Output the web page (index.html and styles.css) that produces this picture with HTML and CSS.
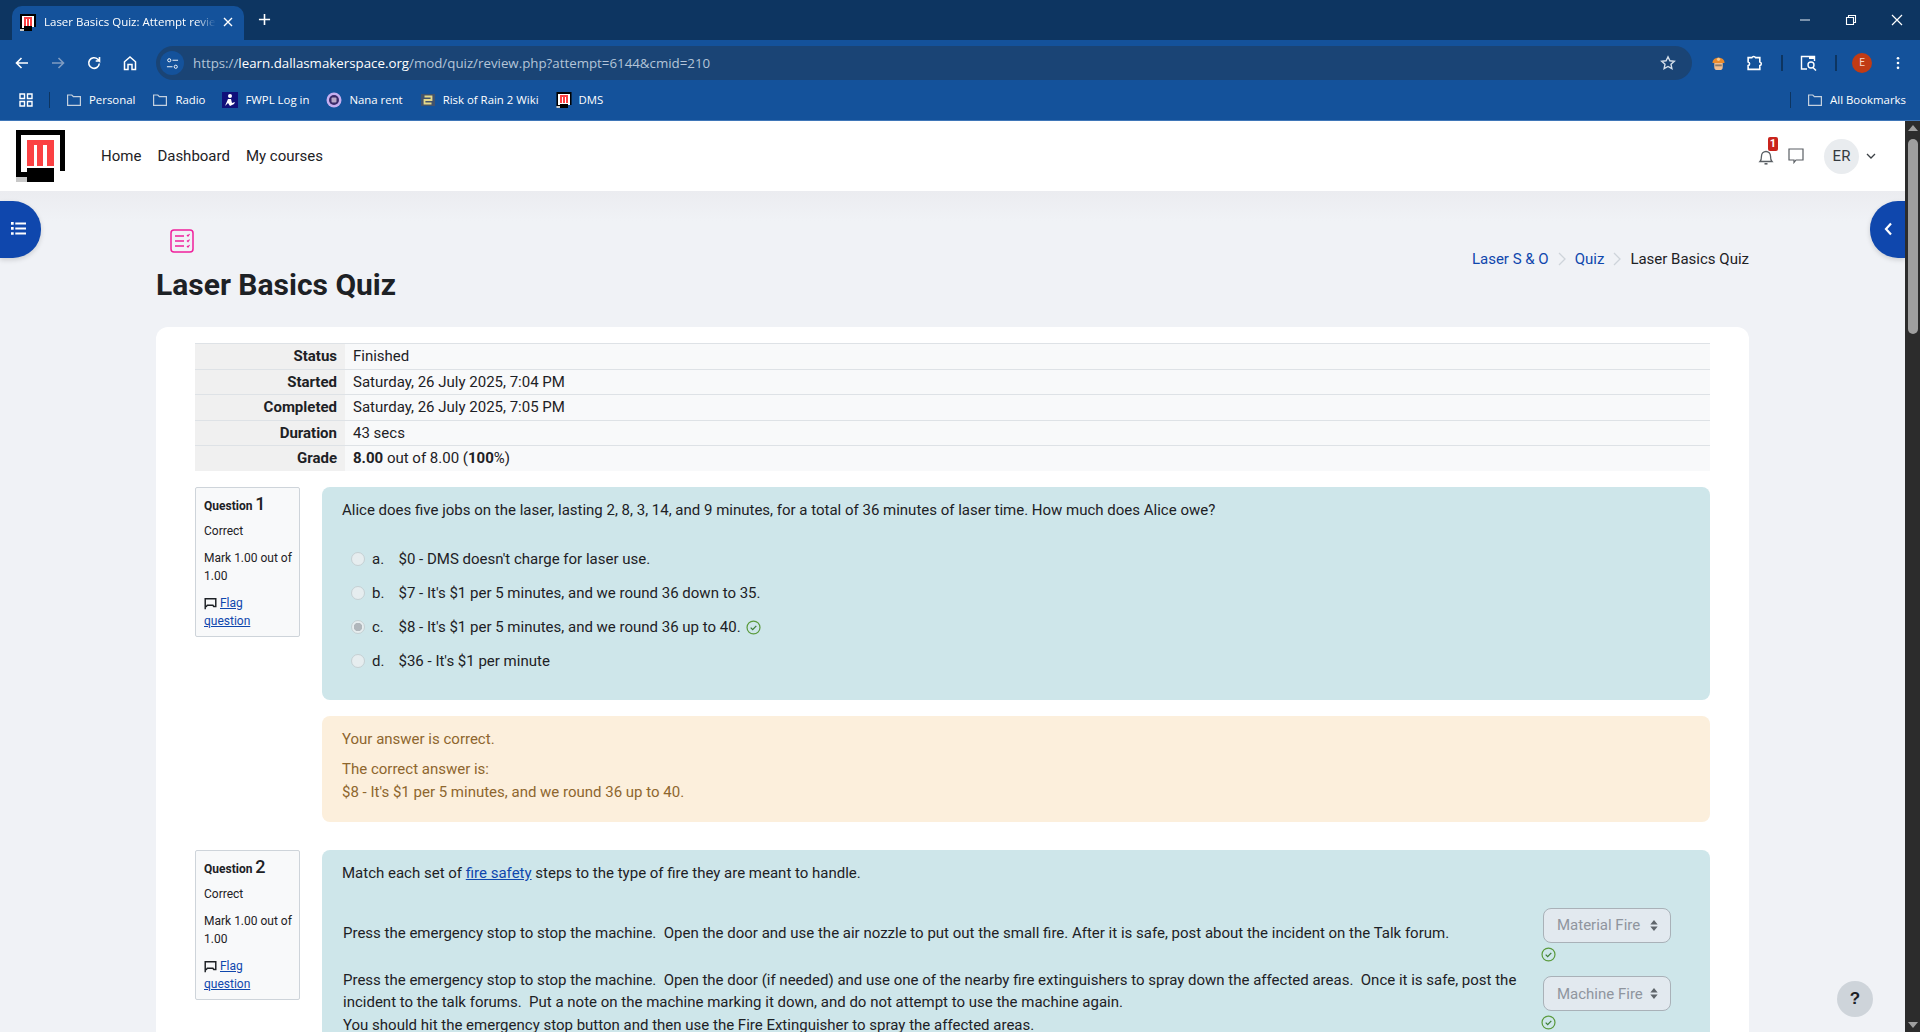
FILE: index.html
```html
<!DOCTYPE html>
<html lang="en">
<head>
  <meta charset="UTF-8">
  <title>Laser Basics Quiz: Attempt review</title>
  <link rel="stylesheet" href="styles.css">
</head>
<body>

  <svg class="defs" width="0" height="0">
    <defs>
      <symbol id="dms" viewBox="0 0 49 52" shape-rendering="crispEdges">
        <path fill="#000" d="M0 0h49v41H38v11H11v-5H0z"/>
        <path fill="#fff" d="M5 5h39v36h-6v-3H11v4H5z"/>
        <path fill="#fb4143" d="M11 10h27v26h-7V15h-4v21h-6V15h-3.500v21H11z"/>
        <path fill="#c8c8c8" d="M0 47h11v5H0z"/>
      </symbol>
      <symbol id="folder" viewBox="0 0 16 16">
        <path fill="none" stroke="currentColor" stroke-width="1.2" d="M1.6 3h4.2l1.6 1.7h7v8.7H1.6z"/>
      </symbol>
      <symbol id="check" viewBox="0 0 16 16">
        <circle cx="8" cy="8" r="6.9" fill="none" stroke="#5a9a3c" stroke-width="1.3"/>
        <path d="M5 8.2l2.1 2.1L11 6.2" fill="none" stroke="#3d7d35" stroke-width="1.3"/>
      </symbol>
      <symbol id="flag" viewBox="0 0 16 16">
        <path d="M1.5 15V2.2h13v9.6H12l-1-1.600H4l-1.200 1.600H1.500" fill="none" stroke="#1d2125" stroke-width="1.8"/>
      </symbol>
    </defs>
  </svg>

  <!-- Browser -->
  <div class="tabstrip">
    <div class="tab">
      <svg class="favicon"><use href="#dms"/></svg>
      <span class="tab-title">Laser Basics Quiz: Attempt review</span>
      <svg class="ico-s" viewBox="0 0 12 12"><path d="M2 2l8 8M10 2l-8 8" stroke="#fff" stroke-width="1.4"/></svg>
    </div>
    <svg class="new-tab" viewBox="0 0 14 14"><path d="M7 1v12M1 7h12" stroke="#fff" stroke-width="1.7"/></svg>
    <div class="win-controls">
      <svg viewBox="0 0 12 12"><path d="M1 6h10" stroke="#c4d0de" stroke-width="1.2"/></svg>
      <svg viewBox="0 0 12 12"><path d="M1.5 3.5h7v7h-7zM3.5 3.5v-2h7v7h-2" fill="none" stroke="#fff" stroke-width="1.1"/></svg>
      <svg viewBox="0 0 12 12"><path d="M1 1l10 10M11 1L1 11" stroke="#fff" stroke-width="1.2"/></svg>
    </div>
  </div>

  <div class="toolbar">
    <div class="tool-btns">
      <svg viewBox="0 0 16 16"><path d="M14 8H2.5M7.5 3l-5 5 5 5" fill="none" stroke="#fff" stroke-width="1.6"/></svg>
      <svg viewBox="0 0 16 16"><path d="M2 8h11.5M8.5 3l5 5-5 5" fill="none" stroke="#7f9cc2" stroke-width="1.6"/></svg>
      <svg viewBox="0 0 16 16"><path d="M13.3 8.5a5.3 5.3 0 1 1-1.5-4.2L13.5 6V2M13.5 6H9.7" fill="none" stroke="#fff" stroke-width="1.6"/></svg>
      <svg viewBox="0 0 16 16"><path d="M2.5 14.500V6.800L8 2l5.500 4.800v7.700H10V9.500H6v5z" fill="none" stroke="#fff" stroke-width="1.5"/></svg>
    </div>
    <div class="urlbar">
      <span class="site-info">
        <svg viewBox="0 0 14 14"><circle cx="3.500" cy="3.500" r="1.700" fill="none" stroke="#fff"/><path d="M7 3.500h6M1 10.500h6" stroke="#fff"/><circle cx="10.500" cy="10.500" r="1.700" fill="none" stroke="#fff"/></svg>
      </span>
      <span class="url"><span class="url-dim">https://</span>learn.dallasmakerspace.org<span class="url-dim">/mod/quiz/review.php?attempt=6144&amp;cmid=210</span></span>
      <svg class="star" viewBox="0 0 16 16"><path d="M8 1.800l1.900 4 4.400.5-3.300 3 .9 4.400L8 11.500l-3.900 2.200.9-4.400-3.300-3 4.400-.5z" fill="none" stroke="#d5dfea" stroke-width="1.400"/></svg>
    </div>
    <div class="tool-right">
      <svg class="ext" viewBox="0 0 16 16"><path d="M1.500 7.500a6.500 6 0 0 1 13 0z" fill="#e98a2c"/><circle cx="8" cy="3.500" r="1.700" fill="#f7c98e"/><path d="M3.500 7.500h9v4.500a3 3 0 0 1-3 3h-3a3 3 0 0 1-3-3z" fill="#f0bd90"/><path d="M4.500 9h7v2h-7z" fill="#8a7a6a"/></svg>
      <svg class="puzzle" viewBox="0 0 16 16"><path d="M2 2.500h3.500a2 2 0 0 1 3.500 0h4v4a1.800 1.800 0 0 1 0 3.500v3.500H2v-3.500a1.800 1.800 0 0 0 0-3.500z" fill="none" stroke="#fff" stroke-width="1.500"/></svg>
      <i class="tool-sep"></i>
      <svg class="tab-search" viewBox="0 0 18 16"><path d="M7 14H1.500V1.500h13V6" fill="none" stroke="#fff" stroke-width="1.400"/><path d="M9 1.500h5.500V4H9z" fill="#fff"/><circle cx="11" cy="10" r="3" fill="none" stroke="#fff" stroke-width="1.400"/><path d="M13 12.500l3 3" stroke="#fff" stroke-width="1.500"/></svg>
      <i class="tool-sep"></i>
      <span class="profile">E</span>
      <svg class="dots" viewBox="0 0 4 16"><circle cx="2" cy="2.500" r="1.500" fill="#fff"/><circle cx="2" cy="8" r="1.500" fill="#fff"/><circle cx="2" cy="13.500" r="1.500" fill="#fff"/></svg>
    </div>
  </div>

  <div class="bookmarks">
    <svg class="apps" viewBox="0 0 14 14"><path d="M1 1h4.500v4.500H1zM8.500 1H13v4.500H8.500zM1 8.500h4.500V13H1zM8.500 8.500H13V13H8.500z" fill="none" stroke="#fff" stroke-width="1.400"/></svg>
    <i class="bm-sep"></i>
    <span class="bm"><svg class="bm-folder"><use href="#folder"/></svg>Personal</span>
    <span class="bm"><svg class="bm-folder"><use href="#folder"/></svg>Radio</span>
    <span class="bm"><svg viewBox="0 0 16 16"><path fill="#10107a" d="M0 0h16v16H0z"/><circle cx="8" cy="4" r="2" fill="#fff"/><path d="M6 7h3l1 4 3-1-1 2-4 2-2-3-3 3z" fill="#fff"/></svg>FWPL Log in</span>
    <span class="bm"><svg viewBox="0 0 16 16"><circle cx="8" cy="8" r="7.500" fill="#c6aef0"/><circle cx="8" cy="8" r="5" fill="#3a2a6a"/><rect x="5.500" y="5.500" width="5" height="5" rx="1" fill="#b9a8c8"/></svg>Nana rent</span>
    <span class="bm"><svg viewBox="0 0 16 16"><path fill="#43536b" d="M1 2h14v12H1z"/><path d="M4.500 4.500h7v3.500h-7v3.500h7" fill="none" stroke="#e5d98a" stroke-width="1.800"/></svg>Risk of Rain 2 Wiki</span>
    <span class="bm"><svg viewBox="0 0 49 52"><use href="#dms"/></svg>DMS</span>
    <i class="bm-sep bm-sep-right"></i>
    <span class="bm bm-last"><svg class="bm-folder"><use href="#folder"/></svg>All Bookmarks</span>
  </div>

  <div class="window">
    <div class="viewport">

      <!-- Barra do site -->
      <nav class="navbar">
        <svg class="logo"><use href="#dms"/></svg>
        <a class="nav-link">Home</a>
        <a class="nav-link">Dashboard</a>
        <a class="nav-link">My courses</a>
        <div class="nav-right">
          <span class="bell">
            <svg viewBox="0 0 16 18"><path d="M2 13.500c1.500-1.500 1.500-3 1.500-5.500a4.500 4.500 0 0 1 9 0c0 2.500 0 4 1.500 5.500z" fill="none" stroke="#5a5f64" stroke-width="1.300"/><path d="M6.500 15.800h3" stroke="#5a5f64" stroke-width="1.600"/></svg>
            <b class="badge">1</b>
          </span>
          <svg class="chat" viewBox="0 0 16 16"><path d="M1 1h14v11H8l-2 2.500V12H1z" fill="none" stroke="#5a5f64" stroke-width="1.200"/></svg>
          <span class="avatar">ER</span>
          <svg class="caret" viewBox="0 0 10 6"><path d="M1 1l4 4 4-4" fill="none" stroke="#3b4045" stroke-width="1.300"/></svg>
        </div>
      </nav>

      <button class="drawer-btn drawer-left">
        <svg viewBox="0 0 14 12"><path d="M0 0h2.500v2.500H0zM4 .3h10v2H4zM0 4.700h2.500v2.500H0zM4 5h10v2H4zM0 9.400h2.500v2.500H0zM4 9.700h10v2H4z" fill="#fff"/></svg>
      </button>
      <button class="drawer-btn drawer-right">
        <svg viewBox="0 0 8 14"><path d="M6.500 1.500L1.500 7l5 5.500" fill="none" stroke="#fff" stroke-width="2.200"/></svg>
      </button>
      <button class="help-btn">?</button>

      <main class="main">
        <header class="page-head">
          <div class="head-left">
            <svg class="quiz-icon" viewBox="0 0 24 24">
              <rect x="1" y="1" width="22" height="22" rx="3" fill="none" stroke="#f0219c" stroke-width="1.500"/>
              <path d="M5 7h9M5 12h9M5 17h9" stroke="#f0219c" stroke-width="1.500"/>
              <path d="M17 6l1 1 1.500-2M17 11.500l1 1 1.500-2M17 17l1 1 1.500-2" fill="none" stroke="#f0219c" stroke-width="1.200"/>
            </svg>
            <h1>Laser Basics Quiz</h1>
          </div>
          <div class="breadcrumb">
            <a>Laser S &amp; O</a>
            <svg viewBox="0 0 8 14"><path d="M1 1l6 6-6 6" fill="none" stroke="#ced4da" stroke-width="1.300"/></svg>
            <a>Quiz</a>
            <svg viewBox="0 0 8 14"><path d="M1 1l6 6-6 6" fill="none" stroke="#ced4da" stroke-width="1.300"/></svg>
            <span>Laser Basics Quiz</span>
          </div>
        </header>

        <section class="card">
          <table class="summary">
            <tr><th>Status</th><td>Finished</td></tr>
            <tr><th>Started</th><td>Saturday, 26 July 2025, 7:04 PM</td></tr>
            <tr><th>Completed</th><td>Saturday, 26 July 2025, 7:05 PM</td></tr>
            <tr><th>Duration</th><td>43 secs</td></tr>
            <tr><th>Grade</th><td><b>8.00</b> out of 8.00 (<b>100</b>%)</td></tr>
          </table>

          <!-- Questão 1 -->
          <article class="que">
            <aside class="que-info">
              <h3>Question <span>1</span></h3>
              <p>Correct</p>
              <p>Mark 1.00 out of 1.00</p>
              <p><svg class="flag"><use href="#flag"/></svg> <a>Flag<br>question</a></p>
            </aside>
            <div class="que-body">
              <div class="que-content">
                <p class="qtext">Alice does five jobs on the laser, lasting 2, 8, 3, 14, and 9 minutes, for a total of 36 minutes of laser time. How much does Alice owe?</p>
                <div class="answers">
                  <label class="answer"><input type="radio" disabled><span class="letter">a.</span>$0 - DMS doesn't charge for laser use.</label>
                  <label class="answer"><input type="radio" disabled><span class="letter">b.</span>$7 - It's $1 per 5 minutes, and we round 36 down to 35.</label>
                  <label class="answer"><input type="radio" disabled checked><span class="letter">c.</span>$8 - It's $1 per 5 minutes, and we round 36 up to 40.<svg class="ok ok-inline"><use href="#check"/></svg></label>
                  <label class="answer"><input type="radio" disabled><span class="letter">d.</span>$36 - It's $1 per minute</label>
                </div>
              </div>
              <div class="feedback">
                <p>Your answer is correct.</p>
                <p class="right-answer">The correct answer is:<br>$8 - It's $1 per 5 minutes, and we round 36 up to 40.</p>
              </div>
            </div>
          </article>

          <!-- Questão 2 -->
          <article class="que">
            <aside class="que-info">
              <h3>Question <span>2</span></h3>
              <p>Correct</p>
              <p>Mark 1.00 out of 1.00</p>
              <p><svg class="flag"><use href="#flag"/></svg> <a>Flag<br>question</a></p>
            </aside>
            <div class="que-body">
              <div class="que-content">
                <p class="qtext">Match each set of <a>fire safety</a> steps to the type of fire they are meant to handle.</p>
                <div class="matches">
                  <div class="match">
                    <p>Press the emergency stop to stop the machine.&nbsp; Open the door and use the air nozzle to put out the small fire. After it is safe, post about the incident on the Talk forum.</p>
                    <div class="match-pick">
                      <div class="select">Material Fire<svg viewBox="0 0 8 12"><path d="M4 0l4 5H0zM4 12L0 7h8z" fill="#5f656b"/></svg></div>
                      <svg class="ok"><use href="#check"/></svg>
                    </div>
                  </div>
                  <div class="match">
                    <p>Press the emergency stop to stop the machine.&nbsp; Open the door (if needed) and use one of the nearby fire extinguishers to spray down the affected areas.&nbsp; Once it is safe, post the incident to the talk forums.&nbsp; Put a note on the machine marking it down, and do not attempt to use the machine again.<br>You should hit the emergency stop button and then use the Fire Extinguisher to spray the affected areas.</p>
                    <div class="match-pick">
                      <div class="select">Machine Fire<svg viewBox="0 0 8 12"><path d="M4 0l4 5H0zM4 12L0 7h8z" fill="#5f656b"/></svg></div>
                      <svg class="ok"><use href="#check"/></svg>
                    </div>
                  </div>
                </div>
              </div>
            </div>
          </article>
        </section>
      </main>
    </div>

    <div class="scrollbar">
      <i class="arrow-up"></i>
      <i class="thumb"></i>
      <i class="arrow-down"></i>
    </div>
  </div>

</body>
</html>
```

FILE: styles.css
```css
* {
  box-sizing: border-box;
}

html, body {
  height: 100%;
}

body {
  margin: 0;
  display: flex;
  flex-direction: column;
  overflow: hidden;
  font-family: Roboto, "Liberation Sans", sans-serif;
  font-size: 15px;
  line-height: 22.5px;
  color: #1d2125;
}

.defs {
  position: absolute;
}

p {
  margin: 0;
}

/* Browser */
.tabstrip {
  height: 40px;
  flex: none;
  display: flex;
  align-items: flex-end;
  padding-left: 12px;
  background-color: #0d3561;
  color: white;
}

.tab {
  width: 232px;
  height: 34px;
  display: flex;
  align-items: center;
  padding: 0 10px 2px 8px;
  background-color: #14529b;
  border-radius: 10px 10px 0 0;
}

.favicon {
  width: 16px;
  height: 17px;
  flex: none;
  margin-right: 8px;
}

.tab-title {
  flex: 1;
  overflow: hidden;
  white-space: nowrap;
  font-family: "Open Sans", sans-serif;
  font-size: 11.5px;
  line-height: 16px;
  -webkit-mask-image: linear-gradient(to right, black 88%, transparent 100%);
  mask-image: linear-gradient(to right, black 88%, transparent 100%);
}

.ico-s {
  width: 12px;
  height: 12px;
  flex: none;
  margin-left: 6px;
}

.new-tab {
  width: 13px;
  height: 13px;
  margin: 0 0 14px 14px;
}

.win-controls {
  margin-left: auto;
  align-self: flex-start;
  display: flex;
  gap: 34px;
  padding: 14px 17px 0 0;
}

.win-controls svg {
  width: 12px;
  height: 12px;
}

.toolbar {
  height: 40px;
  flex: none;
  display: flex;
  align-items: center;
  background-color: #14529b;
}

.tool-btns {
  width: 156px;
  display: flex;
  gap: 20px;
  padding-left: 14px;
  padding-top: 6px;
}

.tool-btns svg {
  width: 16px;
  height: 16px;
}

.urlbar {
  width: 1536px;
  height: 34px;
  margin-top: 6px;
  display: flex;
  align-items: center;
  padding: 0 16px 0 4px;
  background-color: #1a4475;
  border-radius: 17px;
}

.site-info {
  width: 24px;
  height: 24px;
  display: flex;
  align-items: center;
  justify-content: center;
  background-color: #14529b;
  border-radius: 50%;
  margin-right: 9px;
}

.site-info svg {
  width: 13px;
  height: 13px;
}

.url {
  flex: 1;
  font-family: "Open Sans", sans-serif;
  font-size: 13.3px;
  color: white;
}

.url-dim {
  color: #b4c4d8;
}

.star {
  width: 16px;
  height: 16px;
}

.tool-right {
  flex: 1;
  display: flex;
  align-items: center;
  padding-top: 6px;
}

.ext {
  width: 15px;
  height: 15px;
  margin-left: 19px;
}

.puzzle {
  width: 17px;
  height: 17px;
  margin-left: 20px;
}

.tool-sep {
  width: 2px;
  height: 16px;
  background-color: #0d3561;
}

.puzzle + .tool-sep {
  margin: 0 17px 0 18px;
}

.tab-search {
  width: 18px;
  height: 16px;
}

.tab-search + .tool-sep {
  margin: 0 15px 0 17px;
}

.profile {
  width: 20px;
  height: 20px;
  display: flex;
  align-items: center;
  justify-content: center;
  background-color: #c13b14;
  border-radius: 50%;
  font-size: 10px;
  color: #f5d5c8;
}

.dots {
  width: 4px;
  height: 14px;
  margin-left: 24px;
}

.bookmarks {
  height: 41px;
  flex: none;
  display: flex;
  align-items: center;
  padding-left: 19px;
  background-color: #14529b;
  border-bottom: 1px solid #3f76b8;
  font-family: "Open Sans", sans-serif;
  font-size: 11.4px;
  color: white;
}

.apps {
  width: 14px;
  height: 14px;
}

.bm-sep {
  width: 1px;
  height: 16px;
  margin: 0 16px;
  background-color: #0d3561;
}

.bm {
  display: flex;
  align-items: center;
  margin-right: 17px;
  white-space: nowrap;
}

.bm svg {
  width: 16px;
  height: 16px;
  margin-right: 7px;
}

.bm-folder {
  color: #c4d0de;
}

.bm-sep-right {
  margin-left: auto;
}

.bm-last {
  margin-right: 14px;
}

.window {
  flex: 1;
  min-height: 0;
  display: flex;
}

.viewport {
  flex: 1;
  position: relative;
  overflow: hidden;
  background-color: #f0f2f6;
}

.scrollbar {
  width: 15px;
  flex: none;
  display: flex;
  flex-direction: column;
  align-items: center;
  padding-top: 4px;
  background-color: #2c2c2c;
}

.arrow-up {
  border: 5px solid transparent;
  border-top: 0;
  border-bottom: 6px solid #9f9f9f;
}

.thumb {
  width: 10px;
  height: 195px;
  margin-top: 8px;
  background-color: #9f9f9f;
  border-radius: 5px;
}

.arrow-down {
  margin-top: auto;
  margin-bottom: 4px;
  border: 5px solid transparent;
  border-bottom: 0;
  border-top: 6px solid #9f9f9f;
}

/* Barra do site */
.navbar {
  height: 70px;
  display: flex;
  align-items: center;
  padding: 0 0 0 16px;
  background-color: white;
}

.logo {
  width: 49px;
  height: 52px;
  margin-right: 28px;
  align-self: flex-start;
  margin-top: 9px;
}

.nav-link {
  padding: 0 8px;
  color: #1d2125;
}

.nav-right {
  margin-left: auto;
  display: flex;
  align-items: center;
  padding-right: 29px;
}

.bell {
  position: relative;
  width: 18px;
  height: 18px;
  margin-top: 2px;
}

.bell svg {
  width: 16px;
  height: 18px;
  display: block;
}

.badge {
  position: absolute;
  left: 10px;
  top: -11px;
  width: 10px;
  height: 14px;
  background-color: #c9241d;
  border-radius: 2px;
  font-size: 11px;
  line-height: 14px;
  text-align: center;
  color: white;
}

.chat {
  width: 16px;
  height: 16px;
  margin: 0 20px 0 12px;
}

.avatar {
  width: 35px;
  height: 35px;
  display: flex;
  align-items: center;
  justify-content: center;
  background-color: #e9ecef;
  border-radius: 50%;
  color: #343a40;
}

.caret {
  width: 10px;
  height: 6px;
  margin-left: 7px;
}

.drawer-btn {
  position: absolute;
  top: 80px;
  width: 41px;
  height: 57px;
  padding: 0 0 2px;
  border: none;
  display: flex;
  align-items: center;
  justify-content: center;
  background-color: #0f47ad;
  box-shadow: 0 2px 5px rgba(0, 0, 0, 0.15);
}

.drawer-left {
  left: 0;
  border-radius: 0 28px 28px 0;
  padding-right: 5px;
}

.drawer-left svg {
  width: 15px;
  height: 13px;
}

.drawer-right {
  right: 0;
  width: 35px;
  border-radius: 28px 0 0 28px;
  padding-left: 2px;
}

.drawer-right svg {
  width: 9px;
  height: 14px;
}

.help-btn {
  position: absolute;
  left: 1837px;
  top: 860px;
  z-index: 2;
  width: 36px;
  height: 36px;
  padding: 0;
  border: none;
  background-color: #ced4da;
  border-radius: 50%;
  font-family: "Liberation Sans", sans-serif;
  font-size: 17px;
  font-weight: bold;
  color: #1d2125;
}

.main {
  padding: 38px 156px 0;
  background: linear-gradient(#ebecf0, #f0f2f6 30px) no-repeat;
}

.page-head {
  height: 98px;
  display: flex;
  justify-content: space-between;
}

.quiz-icon {
  width: 24px;
  height: 24px;
  display: block;
  margin-left: 14px;
}

h1 {
  margin: 14px 0 0;
  font-size: 30px;
  font-weight: 700;
  line-height: 36px;
}

.breadcrumb {
  display: flex;
  align-items: center;
  gap: 9px;
  height: 22px;
  margin-top: 19px;
}

.breadcrumb svg {
  width: 8px;
  height: 14px;
}

.breadcrumb a {
  color: #0f47ad;
}

.card {
  padding: 16px 39px 40px;
  background-color: white;
  border-radius: 12px;
}

.summary {
  width: 100%;
  border-collapse: collapse;
}

.summary th,
.summary td {
  padding: 1px 8px;
  border-top: 1px solid #dee2e6;
}

.summary th {
  width: 150px;
  text-align: right;
  font-weight: 700;
  background-color: #f0f0f0;
}

.summary td {
  background-color: #f8f9fa;
}

.summary b {
  font-weight: 700;
}

.que {
  display: grid;
  grid-template-columns: 105px 1fr;
  column-gap: 22px;
  align-items: start;
  margin-top: 16px;
  margin-bottom: 28px;
}

.que-info {
  padding: 5px 4px 6px 8px;
  background-color: #f8f9fa;
  border: 1px solid #ced4da;
  border-radius: 2px;
  font-size: 12px;
  line-height: 18px;
}

.que-info h3 {
  margin: 0 0 5px;
  font-size: 12px;
  font-weight: 700;
  line-height: 21px;
}

.que-info h3 span {
  font-size: 18px;
  font-weight: 500;
}

.que-info p {
  margin-bottom: 9px;
}

.que-info p:last-child {
  margin-bottom: 0;
}

.flag {
  width: 13px;
  height: 13px;
  vertical-align: -3px;
}

a {
  color: #0f47ad;
}

.que-info a,
.qtext a {
  text-decoration: underline;
}

.que-content {
  padding: 12px 20px 22px;
  background-color: #cee6ea;
  border-radius: 8px;
}

.answers {
  margin-top: 21px;
}

.answer {
  height: 34px;
  display: flex;
  align-items: center;
  padding-left: 9px;
}

.answer input {
  appearance: none;
  width: 14px;
  height: 14px;
  margin: 0 7px 0 0;
  background-color: #e6edef;
  border: 1px solid #c5d0d3;
  border-radius: 50%;
}

.answer input:checked {
  background: radial-gradient(circle, #b0b6bb 0 4px, #e6edef 4.5px);
}

.letter {
  width: 26.5px;
}

.ok {
  width: 15px;
  height: 15px;
  display: block;
}

.ok-inline {
  margin-left: 5px;
}

.feedback {
  margin-top: 16px;
  padding: 12px 20px 19px;
  background-color: #fcefdc;
  border-radius: 8px;
  color: #8e662e;
}

.right-answer {
  margin-top: 7.5px;
}

.matches {
  margin-top: 21px;
}

.match {
  display: flex;
  align-items: center;
  gap: 24px;
  padding-left: 1px;
  margin-bottom: 7px;
}

.match p {
  width: 1176px;
}

.match-pick {
  flex: none;
  width: 128px;
  margin-top: 2px;
}

.select {
  height: 35px;
  display: flex;
  align-items: center;
  justify-content: space-between;
  padding: 0 12px 0 13px;
  background-color: #e2e9ef;
  border: 1px solid #a9b1b8;
  border-radius: 8px;
  color: #8f959e;
}

.select svg {
  width: 8px;
  height: 11px;
}

.match-pick .ok {
  margin: 4px 0 0 -2px;
}
```
